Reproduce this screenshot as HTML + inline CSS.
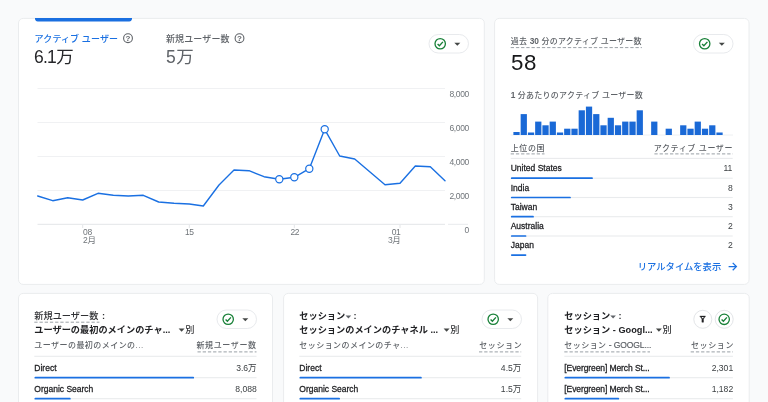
<!DOCTYPE html>
<html lang="ja"><head><meta charset="utf-8"><title>アナリティクス</title>
<style>
html,body{margin:0;padding:0;}
body{width:768px;height:402px;overflow:hidden;background:#f9fafb;position:relative;font-family:"Liberation Sans","Noto Sans CJK JP",sans-serif;color:#202124;}
.card{position:absolute;background:#fff;border:1px solid #ebedef;border-radius:6px;box-sizing:border-box;}
.t{position:absolute;white-space:nowrap;font-size:9px;line-height:12px;transform-origin:0 0;}
.g{color:#5f6368;}
.b{color:#1a70e2;}
.big{font-size:18px;line-height:20px;}
.du{}
.nm{font-size:9.2px;color:#202124;-webkit-text-stroke:0.28px #202124;}
.vl{font-size:9.3px;color:#3c4043;transform-origin:100% 0;}
.ln{position:absolute;height:1px;background:#eceef0;}
.br{position:absolute;height:2px;background:#1a70e2;border-radius:1px;}
.ax{font:8.5px "Liberation Sans","Noto Sans CJK JP",sans-serif;fill:#70757a;letter-spacing:-0.35px;}
.bd{font-weight:bold;}
.tt{font-size:9.2px;}
.dg{font-weight:bold;font-size:8.3px;letter-spacing:0;}
.h8{font-size:8px;font-weight:500;letter-spacing:0.25px;}
.hd{font-size:8px;font-weight:500;letter-spacing:0.45px;margin-right:-0.45px;}
.hr{letter-spacing:0.62px;margin-right:-0.62px;}
svg{position:absolute;left:0;top:0;}
</style></head><body>
<div id="app" style="position:absolute;left:0;top:0;width:768px;height:402px;will-change:transform">
<svg width="768" height="402" viewBox="0 0 768 402">
<g fill="#fff" stroke="#eaecee" stroke-width="1">
<rect x="18.5" y="18.4" width="465.8" height="266" rx="4.6"/>
<rect x="494.6" y="18.4" width="254.4" height="266" rx="4.6"/>
<rect x="18.5" y="293.4" width="254" height="130" rx="4.6"/>
<rect x="283.6" y="293.4" width="254" height="130" rx="4.6"/>
<rect x="547.8" y="293.4" width="201.4" height="130" rx="4.6"/>
</g>
<path d="M35 18h97v0.6a2.8 2.8 0 0 1 -2.8 2.8h-91.4a2.8 2.8 0 0 1 -2.8 -2.8z" fill="#1a6fe0"/>
</svg>
<svg width="768" height="402" viewBox="0 0 768 402">
<line x1="37.5" x2="445" y1="88.5" y2="88.5" stroke="#f0f1f3" stroke-width="1"/><line x1="37.5" x2="445" y1="122.5" y2="122.5" stroke="#f0f1f3" stroke-width="1"/><line x1="37.5" x2="445" y1="156.5" y2="156.5" stroke="#f0f1f3" stroke-width="1"/><line x1="37.5" x2="445" y1="190.5" y2="190.5" stroke="#f0f1f3" stroke-width="1"/>
<line x1="37.5" x2="445" y1="224.3" y2="224.3" stroke="#e3e5e8" stroke-width="1"/><line x1="448" x2="468" y1="224.3" y2="224.3" stroke="#e8eaed" stroke-width="1"/>
<path d="M82.7 225v3M189.3 225v3M294.3 225v3M400 225v3" stroke="#e3e5e8" stroke-width="1" fill="none"/>
<polyline points="37.7,196 52.7,200.7 67.7,197.7 82.7,200 98,193.3 113.3,195.3 128.3,196 143.3,195.3 158.7,202 174,203.3 189.3,204 203.3,206 219,185 234,170 249,170.7 264,176.7 279.3,179.3 294.3,177.3 309.3,168.7 324.7,129.3 339.7,156 354.7,159 370,172 385,184.7 400,183.3 415.3,166 430.3,166.7 445,180.7" fill="none" stroke="#1a70e2" stroke-width="1.4" stroke-linejoin="round" stroke-linecap="round"/>
<circle cx="279.3" cy="179.3" r="3.6" fill="#fff" stroke="#1a70e2" stroke-width="1.2"/><circle cx="294.3" cy="177.3" r="3.6" fill="#fff" stroke="#1a70e2" stroke-width="1.2"/><circle cx="309.3" cy="168.7" r="3.6" fill="#fff" stroke="#1a70e2" stroke-width="1.2"/><circle cx="324.7" cy="129.3" r="3.6" fill="#fff" stroke="#1a70e2" stroke-width="1.2"/>
<text x="469" y="96.5" text-anchor="end" class="ax">8,000</text><text x="469" y="130.5" text-anchor="end" class="ax">6,000</text><text x="469" y="164.5" text-anchor="end" class="ax">4,000</text><text x="469" y="198.5" text-anchor="end" class="ax">2,000</text><text x="469" y="232.5" text-anchor="end" class="ax">0</text>
<text x="83" y="235" class="ax">08</text>
<text x="83" y="243" class="ax">2月</text>
<text x="189.3" y="235" class="ax" text-anchor="middle">15</text>
<text x="294.8" y="235" class="ax" text-anchor="middle">22</text>
<text x="400.5" y="235" class="ax" text-anchor="end">01</text>
<text x="400.5" y="243" class="ax" text-anchor="end">3月</text>
<circle cx="128" cy="38.2" r="4.4" fill="none" stroke="#5f6368" stroke-width="1.1"/><text x="128" y="41.0" text-anchor="middle" style="font:bold 8px 'Liberation Sans',sans-serif;fill:#5f6368">?</text>
<circle cx="239.5" cy="38.2" r="4.4" fill="none" stroke="#5f6368" stroke-width="1.1"/><text x="239.5" y="41.0" text-anchor="middle" style="font:bold 8px 'Liberation Sans',sans-serif;fill:#5f6368">?</text>
<rect x="429" y="34.5" width="39.5" height="18.5" rx="9.25" fill="#fff" stroke="#e8eaed" stroke-width="1"/><circle cx="440.2" cy="43.75" r="5.2" fill="none" stroke="#188038" stroke-width="1.3"/><path d="M437.59999999999997 43.95 L439.4 45.75 L442.9 41.85" fill="none" stroke="#188038" stroke-width="1.4"/><path d="M454.3 42.650000000000006 L460.3 42.650000000000006 L457.3 45.65 Z" fill="#444746"/>
<rect x="693.5" y="34.5" width="39.5" height="18.5" rx="9.25" fill="#fff" stroke="#e8eaed" stroke-width="1"/><circle cx="704.7" cy="43.75" r="5.2" fill="none" stroke="#188038" stroke-width="1.3"/><path d="M702.1 43.95 L703.9000000000001 45.75 L707.4000000000001 41.85" fill="none" stroke="#188038" stroke-width="1.4"/><path d="M718.8 42.650000000000006 L724.8 42.650000000000006 L721.8 45.65 Z" fill="#444746"/>
<rect x="217" y="310" width="39.5" height="18.5" rx="9.25" fill="#fff" stroke="#e8eaed" stroke-width="1"/><circle cx="228.2" cy="319.25" r="5.2" fill="none" stroke="#188038" stroke-width="1.3"/><path d="M225.6 319.45 L227.39999999999998 321.25 L230.89999999999998 317.35" fill="none" stroke="#188038" stroke-width="1.4"/><path d="M242.3 318.15 L248.3 318.15 L245.3 321.15 Z" fill="#444746"/>
<rect x="482" y="310" width="39.5" height="18.5" rx="9.25" fill="#fff" stroke="#e8eaed" stroke-width="1"/><circle cx="493.2" cy="319.25" r="5.2" fill="none" stroke="#188038" stroke-width="1.3"/><path d="M490.59999999999997 319.45 L492.4 321.25 L495.9 317.35" fill="none" stroke="#188038" stroke-width="1.4"/><path d="M507.3 318.15 L513.3 318.15 L510.3 321.15 Z" fill="#444746"/>
<line x1="510.5" x2="733" y1="135" y2="135" stroke="#eef0f2" stroke-width="1"/>
<rect x="513.40" y="132.00" width="6.25" height="3" fill="#1a69d6"/><rect x="520.65" y="114.10" width="6.25" height="20.9" fill="#1a69d6"/><rect x="527.90" y="132.50" width="6.25" height="2.5" fill="#1a69d6"/><rect x="535.15" y="121.60" width="6.25" height="13.4" fill="#1a69d6"/><rect x="542.40" y="125.30" width="6.25" height="9.7" fill="#1a69d6"/><rect x="549.65" y="121.60" width="6.25" height="13.4" fill="#1a69d6"/><rect x="556.90" y="132.50" width="6.25" height="2.5" fill="#1a69d6"/><rect x="564.15" y="128.70" width="6.25" height="6.3" fill="#1a69d6"/><rect x="571.40" y="128.70" width="6.25" height="6.3" fill="#1a69d6"/><rect x="578.65" y="110.30" width="6.25" height="24.7" fill="#1a69d6"/><rect x="585.90" y="106.60" width="6.25" height="28.4" fill="#1a69d6"/><rect x="593.15" y="114.10" width="6.25" height="20.9" fill="#1a69d6"/><rect x="600.40" y="125.30" width="6.25" height="9.7" fill="#1a69d6"/><rect x="607.65" y="117.80" width="6.25" height="17.2" fill="#1a69d6"/><rect x="614.90" y="125.30" width="6.25" height="9.7" fill="#1a69d6"/><rect x="622.15" y="121.60" width="6.25" height="13.4" fill="#1a69d6"/><rect x="629.40" y="121.60" width="6.25" height="13.4" fill="#1a69d6"/><rect x="636.65" y="110.30" width="6.25" height="24.7" fill="#1a69d6"/><rect x="651.15" y="121.60" width="6.25" height="13.4" fill="#1a69d6"/><rect x="665.65" y="128.70" width="6.25" height="6.3" fill="#1a69d6"/><rect x="680.15" y="125.30" width="6.25" height="9.7" fill="#1a69d6"/><rect x="687.40" y="128.70" width="6.25" height="6.3" fill="#1a69d6"/><rect x="694.65" y="121.60" width="6.25" height="13.4" fill="#1a69d6"/><rect x="701.90" y="128.70" width="6.25" height="6.3" fill="#1a69d6"/><rect x="709.15" y="125.30" width="6.25" height="9.7" fill="#1a69d6"/><rect x="716.40" y="132.50" width="6.25" height="2.5" fill="#1a69d6"/>
<circle cx="702.8" cy="319.3" r="9" fill="#fff" stroke="#e3e5e8"/>
<path d="M699.8 316.1h5.8l-2.1 2.9v3.2h-1.6v-3.2z" fill="#202124" stroke="#202124" stroke-width="0.4" stroke-linejoin="round"/><path d="M701.5 317h2.4l-1.2 1.5z" fill="#fff"/>
<circle cx="724.2" cy="319.3" r="9" fill="#fff" stroke="#e3e5e8"/>
<circle cx="724.2" cy="319.3" r="5.2" fill="none" stroke="#188038" stroke-width="1.3"/><path d="M721.6 319.5 L723.4000000000001 321.3 L726.9000000000001 317.40000000000003" fill="none" stroke="#188038" stroke-width="1.4"/>
<path d="M728.6 266.6h7.6M732.7 262.9l3.7 3.7l-3.7 3.7" fill="none" stroke="#1a70e2" stroke-width="1.25"/>
<path d="M178.6 328.5 L184.6 328.5 L181.6 331.69999999999993 Z" fill="#444746"/>
<path d="M443.6 328.5 L449.6 328.5 L446.6 331.69999999999993 Z" fill="#444746"/>
<path d="M655.9 328.5 L661.9 328.5 L658.9 331.69999999999993 Z" fill="#444746"/>
<path d="M345.59999999999997 315.59999999999997 L351.2 315.59999999999997 L348.4 318.59999999999997 Z" fill="#5f6368"/>
<path d="M610.3000000000001 315.59999999999997 L615.9 315.59999999999997 L613.1 318.59999999999997 Z" fill="#5f6368"/>
</svg>

<div class="t b" style="left:34px;top:32px;font-weight:500;letter-spacing:0.12px;transform:translate(0.60px,0.80px) rotate(0.001deg)">アクティブ ユーザー</div>
<div class="t big" style="left:34px;top:47px;font-size:17.5px;color:#26272a;transform:translate(0.00px,0.20px) rotate(0.001deg)"><span style="letter-spacing:-0.8px">6.</span><span style="letter-spacing:-0.4px">1</span>万</div>
<div class="t g" style="left:166px;top:32px;font-weight:500;letter-spacing:0.12px;transform:translate(0.00px,0.80px) rotate(0.001deg)">新規ユーザー数</div>
<div class="t big g" style="left:166px;top:47px;font-size:17.5px;transform:translate(0.00px,0.20px) rotate(0.001deg)"><span style="letter-spacing:0.4px">5</span>万</div>

<div class="t g du h8" style="left:510px;top:34px;transform:translate(0.70px,0.60px) rotate(0.001deg)">過去 <span class="dg">30</span> 分のアクティブ ユーザー数</div>
<div class="t" style="left:511px;top:50px;font-size:22.3px;line-height:26px;letter-spacing:0.7px;color:#17181a;transform:translate(0.00px,0.40px) rotate(0.001deg)">58</div>
<div class="t g h8" style="left:510px;top:89px;transform:translate(0.70px,0.00px) rotate(0.001deg)"><span class="dg">1</span> 分あたりのアクティブ ユーザー数</div>
<div class="t g du hd hr" style="left:510px;top:142px;transform:translate(0.70px,0.60px) rotate(0.001deg)">上位の国</div>
<div class="t g du hd hr" style="right:36px;top:142px;transform:translate(0.70px,0.60px) rotate(0.001deg)">アクティブ ユーザー</div>

<div class="t nm" style="left:510px;top:162px;transform:translate(0.70px,0.30px) rotate(0.001deg) scaleX(0.925)">United States</div><div class="t vl" style="right:36px;top:162px;transform:translate(0.70px,0.30px) rotate(0.001deg) scaleX(0.925)">11</div>
<div class="t nm" style="left:510px;top:181px;transform:translate(0.70px,0.60px) rotate(0.001deg) scaleX(0.925)">India</div><div class="t vl" style="right:36px;top:181px;transform:translate(0.70px,0.60px) rotate(0.001deg) scaleX(0.925)">8</div>
<div class="t nm" style="left:510px;top:200px;transform:translate(0.70px,0.80px) rotate(0.001deg) scaleX(0.925)">Taiwan</div><div class="t vl" style="right:36px;top:200px;transform:translate(0.70px,0.80px) rotate(0.001deg) scaleX(0.925)">3</div>
<div class="t nm" style="left:510px;top:220px;transform:translate(0.70px,0.10px) rotate(0.001deg) scaleX(0.925)">Australia</div><div class="t vl" style="right:36px;top:220px;transform:translate(0.70px,0.10px) rotate(0.001deg) scaleX(0.925)">2</div>
<div class="t nm" style="left:510px;top:239px;transform:translate(0.70px,0.20px) rotate(0.001deg) scaleX(0.925)">Japan</div><div class="t vl" style="right:36px;top:239px;transform:translate(0.70px,0.20px) rotate(0.001deg) scaleX(0.925)">2</div>
<div class="t b" style="left:637px;top:261px;font-size:9.3px;font-weight:500;transform:translate(0.80px,0.00px) rotate(0.001deg)">リアルタイムを表示</div>

<div class="t du tt" style="left:34px;top:310px;color:#303134;font-weight:500;transform:translate(0.30px,0.30px) rotate(0.001deg)">新規ユーザー数</div>
<div class="t tt" style="left:102px;top:310px;color:#303134;font-weight:bold;transform:translate(0.00px,0.30px) rotate(0.001deg)">:</div>
<div class="t tt bd" style="left:34px;top:323px;transform:translate(0.30px,0.70px) rotate(0.001deg)">ユーザーの最初のメインのチャ...</div>
<div class="t tt" style="left:185px;top:323px;color:#303134;font-weight:500;transform:translate(0.30px,0.70px) rotate(0.001deg)">別</div>
<div class="t g hd" style="left:34px;top:340px;transform:translate(0.30px,0.40px) rotate(0.001deg)">ユーザーの最初のメインの...</div>
<div class="t g du hd hr" style="right:512px;top:340px;transform:translate(0.50px,0.40px) rotate(0.001deg)">新規ユーザー数</div>

<div class="t nm" style="left:34px;top:362px;transform:translate(0.30px,0.00px) rotate(0.001deg) scaleX(0.925)">Direct</div><div class="t vl" style="right:512px;top:362px;transform:translate(0.50px,0.00px) rotate(0.001deg) scaleX(0.925)">3.6万</div>
<div class="t nm" style="left:34px;top:383px;transform:translate(0.30px,0.00px) rotate(0.001deg) scaleX(0.925)">Organic Search</div><div class="t vl" style="right:512px;top:383px;transform:translate(0.50px,0.00px) rotate(0.001deg) scaleX(0.925)">8,088</div>

<div class="t tt bd" style="left:299px;top:310px;transform:translate(0.30px,0.30px) rotate(0.001deg)">セッション</div>
<div class="t tt" style="left:353px;top:310px;color:#303134;font-weight:bold;transform:translate(0.60px,0.30px) rotate(0.001deg)">:</div>
<div class="t tt bd" style="left:299px;top:323px;transform:translate(0.30px,0.70px) rotate(0.001deg)">セッションのメインのチャネル ...</div>
<div class="t tt" style="left:450px;top:323px;color:#303134;font-weight:500;transform:translate(0.30px,0.70px) rotate(0.001deg)">別</div>
<div class="t g hd" style="left:299px;top:340px;transform:translate(0.30px,0.40px) rotate(0.001deg)">セッションのメインのチャ...</div>
<div class="t g du hd hr" style="right:247px;top:340px;transform:translate(0.20px,0.40px) rotate(0.001deg)">セッション</div>

<div class="t nm" style="left:299px;top:362px;transform:translate(0.30px,0.00px) rotate(0.001deg) scaleX(0.925)">Direct</div><div class="t vl" style="right:247px;top:362px;transform:translate(0.20px,0.00px) rotate(0.001deg) scaleX(0.925)">4.5万</div>
<div class="t nm" style="left:299px;top:383px;transform:translate(0.30px,0.00px) rotate(0.001deg) scaleX(0.925)">Organic Search</div><div class="t vl" style="right:247px;top:383px;transform:translate(0.20px,0.00px) rotate(0.001deg) scaleX(0.925)">1.5万</div>

<div class="t tt bd" style="left:564px;top:310px;transform:translate(0.30px,0.30px) rotate(0.001deg)">セッション</div>
<div class="t tt" style="left:618px;top:310px;color:#303134;font-weight:bold;transform:translate(0.60px,0.30px) rotate(0.001deg)">:</div>
<div class="t tt bd" style="left:564px;top:323px;transform:translate(0.30px,0.70px) rotate(0.001deg)">セッション - Googl...</div>
<div class="t tt" style="left:662px;top:323px;color:#303134;font-weight:500;transform:translate(0.60px,0.70px) rotate(0.001deg)">別</div>
<div class="t g du hd" style="left:564px;top:340px;transform:translate(0.30px,0.40px) rotate(0.001deg)">セッション<span style="line-height:0;font-size:8.5px;letter-spacing:-0.1px;-webkit-text-stroke:0.2px #5f6368"> - GOOGL...</span></div>
<div class="t g du hd hr" style="right:36px;top:340px;transform:translate(0.90px,0.40px) rotate(0.001deg)">セッション</div>

<div class="t nm" style="left:564px;top:362px;transform:translate(0.30px,0.00px) rotate(0.001deg) scaleX(0.925)"><span style="letter-spacing:-0.1px">[Evergreen] Merch St...</span></div><div class="t vl" style="right:36px;top:362px;transform:translate(0.90px,0.00px) rotate(0.001deg) scaleX(0.925)">2,301</div>
<div class="t nm" style="left:564px;top:383px;transform:translate(0.30px,0.00px) rotate(0.001deg) scaleX(0.925)"><span style="letter-spacing:-0.1px">[Evergreen] Merch St...</span></div><div class="t vl" style="right:36px;top:383px;transform:translate(0.90px,0.00px) rotate(0.001deg) scaleX(0.925)">1,182</div>

<svg width="768" height="402" viewBox="0 0 768 402"><rect x="510.7" y="157.85" width="222.00" height="1.1" fill="#e9ebed"/><rect x="510.7" y="177.65" width="222.00" height="1.1" fill="#e9ebed"/><rect x="510.90" y="177.35" width="82.00" height="1.7" rx="0.85" fill="#1a70e2"/><rect x="510.7" y="196.95" width="222.00" height="1.1" fill="#e9ebed"/><rect x="510.90" y="196.65" width="60.00" height="1.7" rx="0.85" fill="#1a70e2"/><rect x="510.7" y="216.15" width="222.00" height="1.1" fill="#e9ebed"/><rect x="510.90" y="215.85" width="23.00" height="1.7" rx="0.85" fill="#1a70e2"/><rect x="510.7" y="235.45" width="222.00" height="1.1" fill="#e9ebed"/><rect x="510.90" y="235.15" width="15.50" height="1.7" rx="0.85" fill="#1a70e2"/><rect x="510.90" y="254.25" width="15.50" height="1.7" rx="0.85" fill="#1a70e2"/><rect x="34.3" y="355.75" width="222.20" height="1.1" fill="#e9ebed"/><rect x="34.3" y="377.15" width="222.20" height="1.1" fill="#e9ebed"/><rect x="34.50" y="376.85" width="159.60" height="1.7" rx="0.85" fill="#1a70e2"/><rect x="34.3" y="398.15" width="222.20" height="1.1" fill="#e9ebed"/><rect x="34.50" y="397.85" width="36.20" height="1.7" rx="0.85" fill="#1a70e2"/><rect x="299.3" y="355.75" width="221.90" height="1.1" fill="#e9ebed"/><rect x="299.3" y="377.15" width="221.90" height="1.1" fill="#e9ebed"/><rect x="299.50" y="376.85" width="122.30" height="1.7" rx="0.85" fill="#1a70e2"/><rect x="299.3" y="398.15" width="221.90" height="1.1" fill="#e9ebed"/><rect x="299.50" y="397.85" width="40.50" height="1.7" rx="0.85" fill="#1a70e2"/><rect x="564.3" y="355.75" width="168.60" height="1.1" fill="#e9ebed"/><rect x="564.3" y="377.15" width="168.60" height="1.1" fill="#e9ebed"/><rect x="564.50" y="376.85" width="105.40" height="1.7" rx="0.85" fill="#1a70e2"/><rect x="564.3" y="398.15" width="168.60" height="1.1" fill="#e9ebed"/><rect x="564.50" y="397.85" width="54.70" height="1.7" rx="0.85" fill="#1a70e2"/><line x1="510.7" x2="641.9" y1="47.6" y2="47.6" stroke="#9aa0a6" stroke-width="1" stroke-dasharray="3.3 1.9"/><line x1="510.7" x2="544.5" y1="153.9" y2="153.9" stroke="#9aa0a6" stroke-width="1" stroke-dasharray="3.3 1.9"/><line x1="654.4" x2="732.7" y1="153.9" y2="153.9" stroke="#9aa0a6" stroke-width="1" stroke-dasharray="3.3 1.9"/><line x1="34.3" x2="99.4" y1="322.2" y2="322.2" stroke="#9aa0a6" stroke-width="1" stroke-dasharray="3.3 1.9"/><line x1="197.5" x2="256.5" y1="351.9" y2="351.9" stroke="#9aa0a6" stroke-width="1" stroke-dasharray="3.3 1.9"/><line x1="479" x2="521.2" y1="351.9" y2="351.9" stroke="#9aa0a6" stroke-width="1" stroke-dasharray="3.3 1.9"/><line x1="564.3" x2="650" y1="351.9" y2="351.9" stroke="#9aa0a6" stroke-width="1" stroke-dasharray="3.3 1.9"/><line x1="690.7" x2="732.9" y1="351.9" y2="351.9" stroke="#9aa0a6" stroke-width="1" stroke-dasharray="3.3 1.9"/></svg>
</div>
</body></html>
